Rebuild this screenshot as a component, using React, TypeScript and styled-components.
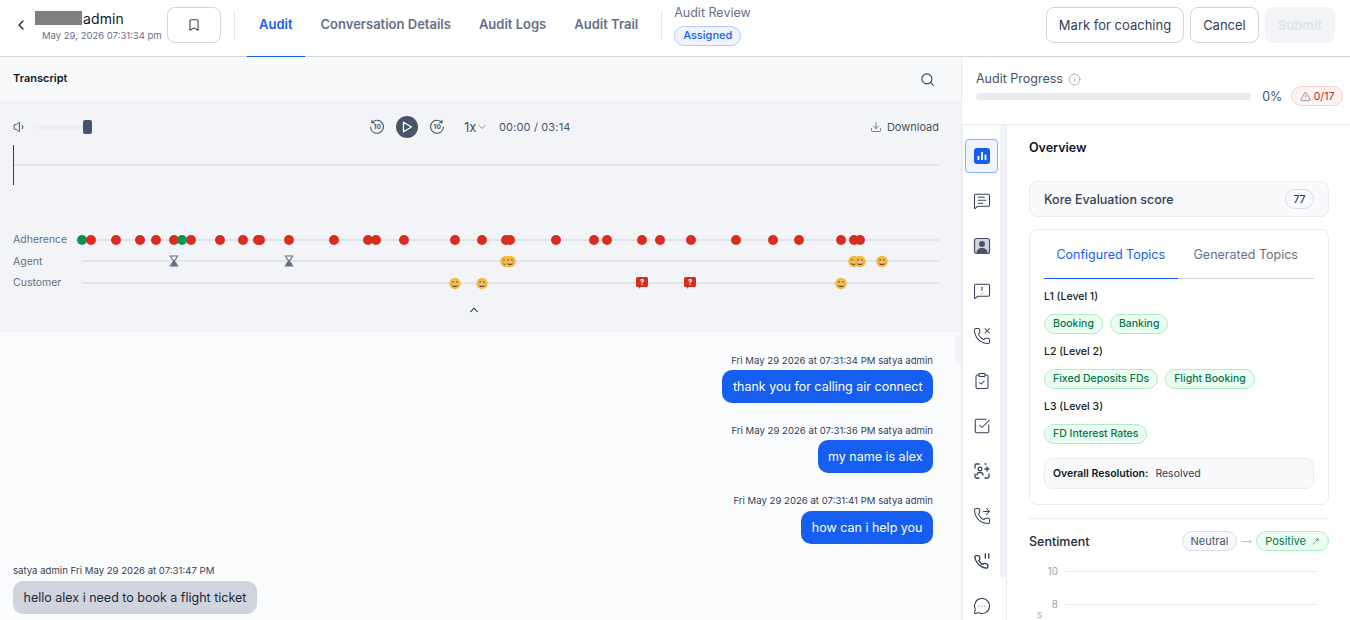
import React from "react";
import styled, { createGlobalStyle } from "styled-components";
import {
  Bookmark, ChevronDown, ChevronLeft, ChevronUp, ClipboardCheck, Download, Info, MessageCircleMore,
  MessageSquareText, MessageSquareWarning, MoveRight, MoveUpRight, PhoneForwarded, PhoneMissed, Search,
  SquareCheckBig, TriangleAlert, Volume1,
} from "lucide-react";

const Global = createGlobalStyle`
  html, body { margin: 0; padding: 0; height: 100%; overflow: hidden; background: #fff; }
  body { font-family: Inter, "Noto Sans", sans-serif; color: #101828; }
  #root { height: 100%; }
  * { box-sizing: border-box; }
`;

const Page = styled.div`
  width: 1350px; height: 620px; display: flex; flex-direction: column; overflow: hidden;
`;
const Header = styled.header`
  height: 57px; flex: none; display: flex; align-items: stretch; border-bottom: 1px solid #d0d5dd; background: #fff;
`;
const BackButton = styled.div`
  width: 35px; display: flex; align-items: center; justify-content: center; padding-left: 7px; padding-bottom: 7px; color: #1d2939;
`;
const Identity = styled.div`
  width: 132px; display: flex; flex-direction: column; padding-top: 10px;
`;
const NameRow = styled.div`
  display: flex; align-items: center; height: 16px; font-size: 14px; color: #101828; letter-spacing: 0.1px;
`;
const Redacted = styled.span`
  display: inline-block; width: 47px; height: 14px; background: #808080; margin-right: 1px;
`;
const DateText = styled.div`
  margin-top: 3px; padding-left: 7px; font-size: 9.5px; line-height: 14px; color: #667085; white-space: nowrap;
`;
const BookmarkButton = styled.div`
  width: 54px; height: 36px; margin-top: 7px; border: 1px solid #d0d5dd; border-radius: 8px; display: flex;
  align-items: center; justify-content: center; color: #344054;
`;
const VDivider = styled.div<{ $ml: number; $mr: number }>`
  width: 1px; height: 30px; margin: 10px ${(p) => p.$mr}px 0 ${(p) => p.$ml}px; background: #e4e7ec;
`;
const Tabs = styled.nav`
  display: flex; align-items: stretch; gap: 4px;
`;
const TabItem = styled.div<{ $active?: boolean }>`
  padding: 0 12px 8px; display: flex; align-items: center; font-size: 13px; font-weight: 600; white-space: nowrap;
  color: ${(p) => (p.$active ? "#155eef" : "#667085")};
  margin-bottom: -1px;
  border-bottom: 1px solid ${(p) => (p.$active ? "#155eef" : "transparent")};
`;
const ReviewBlock = styled.div`
  display: flex; flex-direction: column; align-items: flex-start; padding-top: 5px;
`;
const ReviewLabel = styled.div`
  font-size: 12.5px; line-height: 15px; color: #667085; white-space: nowrap;
`;
const AssignedBadge = styled.div`
  margin-top: 6px; height: 20px; padding: 0 8px; border: 1px solid #b2ccff; border-radius: 10px; background: #eff4ff;
  color: #155eef; font-size: 11px; font-weight: 500; line-height: 17px;
`;
const Actions = styled.div`
  margin-left: auto; display: flex; gap: 6px; padding: 7px 15px 0 0;
`;
const ActionButton = styled.div<{ $disabled?: boolean }>`
  height: 36px; padding: 0 ${(p) => (p.$disabled ? 12 : 12)}px; border-radius: 8px; display: flex; align-items: center;
  font-size: 13px; white-space: nowrap;
  font-weight: ${(p) => (p.$disabled ? 600 : 400)};
  border: 1px solid ${(p) => (p.$disabled ? "#f2f4f7" : "#d0d5dd")};
  background: ${(p) => (p.$disabled ? "#f2f4f7" : "#fff")};
  color: ${(p) => (p.$disabled ? "#e0e3ea" : "#344054")};
`;
const Body = styled.div`
  flex: 1; min-height: 0; display: flex;
`;
const LeftPane = styled.section`
  width: 962px; flex: none; display: flex; flex-direction: column; border-right: 1px solid #e9ebf1; position: relative;
`;
const TranscriptBar = styled.div`
  height: 46px; flex: none; display: flex; align-items: center; justify-content: space-between; padding: 0 26px 0 13px;
  background: #f9fafb; border-bottom: 1px solid #eceef2; color: #344054;
`;
const TranscriptTitle = styled.div`
  font-size: 11px; font-weight: 600; color: #101828; margin-top: -3px;
`;
const Player = styled.div`
  height: 229px; flex: none; background: #f2f4f7; padding: 0 22px 0 13px; display: flex; flex-direction: column; background: #f3f4f8;
`;
const ControlRow = styled.div`
  height: 42px; padding-top: 6px; display: flex; align-items: center; color: #475467; font-size: 11px;
`;
const VolumeGroup = styled.div`
  width: 356px; display: flex; align-items: center; color: #344054;
`;
const VolumeTrack = styled.div`
  width: 59px; height: 4px; margin-left: 6px; border-radius: 2px; background: #eceef2; position: relative;
`;
const VolumeThumb = styled.div`
  position: absolute; right: 0; top: -5px; width: 9px; height: 14px; border-radius: 2px; background: #475569;
`;
const Transport = styled.div`
  display: flex; align-items: center; gap: 11px;
`;
const PlayCircle = styled.div`
  width: 22px; height: 22px; border-radius: 50%; background: #475569; display: flex; align-items: center; justify-content: center;
`;
const Speed = styled.div`
  margin-left: 19px; width: 35px; display: flex; align-items: center; font-size: 13px; color: #475467;
`;
const TimeText = styled.div`
  font-size: 11px; color: #475467; letter-spacing: 0.15px;
`;
const DownloadLink = styled.div`
  margin-left: auto; display: flex; align-items: center; gap: 5px; font-size: 11px; color: #475467;
`;
const Wave = styled.div`
  height: 40px; flex: none; position: relative; display: flex; align-items: center;
`;
const WaveLine = styled.div`
  flex: 1; height: 2px; background: #e2e4ea; margin-top: -1px;
`;
const Cursor = styled.div`
  position: absolute; left: 0; top: 0; bottom: 0; width: 1px; background: #344054;
`;
const Lanes = styled.div`
  margin-top: 44px; display: flex; flex-direction: column; gap: 0;
`;
const Lane = styled.div`
  height: 21.5px; display: flex; align-items: center;
`;
const LaneLabel = styled.div`
  width: 69px; flex: none; font-size: 10.5px; color: #667085;
`;
const LaneTrack = styled.div`
  flex: 1; height: 2px; background: #e2e4ea; position: relative;
`;
const Dot = styled.div<{ $green?: boolean }>`
  position: absolute; top: 1px; width: 10px; height: 10px; margin: -5px 0 0 -5px; border-radius: 50%;
  background: ${(p) => (p.$green ? "#079455" : "#d92d20")};
`;
const Marker = styled.div`
  position: absolute; top: 1px; width: 12px; height: 12px; margin: -6px 0 0 -6px; display: flex;
`;
const CollapseRow = styled.div`
  height: 20px; margin-top: 9px; display: flex; justify-content: center; color: #101828; padding-right: 4px;
`;
const Chat = styled.div`
  flex: 1; min-height: 0; overflow: hidden; background: #fbfcfe; padding: 22px 28px 0 13px; display: flex; flex-direction: column;
`;
const Message = styled.div<{ $mine?: boolean; $mt: number }>`
  display: flex; flex-direction: column; margin-top: ${(p) => p.$mt}px;
  align-items: ${(p) => (p.$mine ? "flex-end" : "flex-start")};
`;
const Meta = styled.div`
  font-size: 9.6px; line-height: 14px; color: #344054; white-space: nowrap;
`;
const Bubble = styled.div<{ $mine?: boolean; $mt: number }>`
  margin-top: ${(p) => p.$mt}px; height: 33px; padding: 0 10.5px; border-radius: 10px; display: flex; align-items: center;
  font-size: 12.5px; white-space: nowrap;
  background: ${(p) => (p.$mine ? "#155eef" : "#d0d5dd")};
  color: ${(p) => (p.$mine ? "#fff" : "#1d2939")};
`;
const PaneScroll = styled.div`
  position: absolute; right: 0; top: 278px; width: 6px; height: 30px; border-radius: 3px; background: #f3f4f7;
`;
const RightPane = styled.aside`
  flex: 1; min-width: 0; display: flex; flex-direction: column;
`;
const ProgressPanel = styled.div`
  height: 68px; flex: none; border-bottom: 1px solid #e9ebf1; padding: 14px 7px 0 14px;
`;
const ProgressTitle = styled.div`
  display: flex; align-items: center; gap: 5px; font-size: 12.5px; color: #475467; line-height: 16px; color: #475467;
`;
const ProgressRow = styled.div`
  display: flex; align-items: center; margin-top: -1px;
`;
const ProgressBar = styled.div`
  width: 276px; height: 7px; border-radius: 4px; background: #e9ebf0;
`;
const Percent = styled.div`
  margin-left: 11px; width: 29px; font-size: 12.5px; color: #475467;
`;
const AlertBadge = styled.div`
  width: 52px; height: 20px; border: 1px solid #fecdca; border-radius: 10px; background: #fef3f2; color: #b42318;
  display: flex; align-items: center; justify-content: center; gap: 3px; font-size: 10.5px;
`;
const Lower = styled.div`
  flex: 1; min-height: 0; display: flex; overflow: hidden;
`;
const Rail = styled.div`
  width: 45px; flex: none; display: flex; border-right: 1px solid #eceef2; position: relative;
  border-left: 1px solid #eef0f4;
`;
const RailIcons = styled.div`
  width: 37px; flex: none; display: flex; flex-direction: column; align-items: center; padding-top: 14px; gap: 11px; color: #344054;
`;
const RailItem = styled.div<{ $active?: boolean }>`
  width: 33px; height: 34px; flex: none; border-radius: 4px; display: flex; align-items: center; justify-content: center;
  border: 1px solid ${(p) => (p.$active ? "#84adff" : "transparent")};
  background: ${(p) => (p.$active ? "#eff4ff" : "transparent")};
`;
const RailScroll = styled.div`
  width: 6px; height: 453px; flex: none; border-radius: 0 0 3px 3px; background: #f1f2f7;
`;
const Content = styled.div`
  flex: 1; min-width: 0; padding: 15px 21px 0 22px;
`;
const SectionTitle = styled.div`
  font-size: 12.5px; font-weight: 600; line-height: 16px; color: #101828;
`;
const ScoreCard = styled.div`
  margin-top: 25px; height: 36px; padding: 0 14px; border: 1px solid #eaecf0; border-radius: 8px; background: #f9fafb;
  display: flex; align-items: center; justify-content: space-between; font-size: 12.5px; font-weight: 500; color: #344054;
`;
const ScoreBadge = styled.div`
  width: 29px; height: 20px; border-radius: 10px; border: 1px solid #d9dcf0; background: #f8f9fc; font-size: 10.5px;
  display: flex; align-items: center; justify-content: center; color: #344054;
`;
const TopicsCard = styled.div`
  margin-top: 12px; height: 276px; padding: 0 14px; border: 1px solid #eaecf0; border-radius: 8px;
`;
const TopicTabs = styled.div`
  height: 49px; display: flex; border-bottom: 1px solid #d0d5dd;
`;
const TopicTab = styled.div<{ $active?: boolean }>`
  width: ${(p) => (p.$active ? 134 : 137)}px; display: flex; align-items: center; justify-content: center; font-size: 12.5px;
  margin-bottom: -1px;
  color: ${(p) => (p.$active ? "#155eef" : "#667085")};
  border-bottom: 1px solid ${(p) => (p.$active ? "#155eef" : "transparent")};
`;
const LevelLabel = styled.div`
  margin-top: 10px; font-size: 10.5px; font-weight: 500; line-height: 16px; color: #101828;
`;
const ChipRow = styled.div`
  margin-top: 9px; display: flex; gap: 7px; margin-bottom: 3px;
`;
const Chip = styled.div`
  height: 20px; padding: 0 8px; border: 1px solid #abefc6; border-radius: 10px; background: #ecfdf3; color: #067647;
  display: flex; align-items: center; font-size: 10.5px; font-weight: 500; white-space: nowrap; padding-bottom: 2px;
`;
const Resolution = styled.div`
  margin-top: 14px; height: 31px; padding: 0 8px; border: 1px solid #eaecf0; border-radius: 8px; background: #f9fafb;
  display: flex; align-items: center; gap: 7px; font-size: 10.5px; color: #344054;
`;
const ResolutionLabel = styled.span`
  font-weight: 600; color: #101828;
`;
const Rule = styled.div`
  margin-top: 13px; height: 1px; background: #eaecf0;
`;
const SentimentRow = styled.div`
  margin-top: 12px; display: flex; align-items: center; justify-content: space-between;
`;
const SentimentTitle = styled.div`
  font-size: 12.5px; color: #1d2939; font-weight: 500;
`;
const PillGroup = styled.div`
  display: flex; align-items: center; gap: 4px; color: #98a2b3;
`;
const Pill = styled.div<{ $positive?: boolean }>`
  height: 20px; padding: 0 8px; border-radius: 10px; display: flex; align-items: center; gap: 5px; font-size: 11px; white-space: nowrap;
  border: 1px solid ${(p) => (p.$positive ? "#abefc6" : "#d9dcf0")};
  background: ${(p) => (p.$positive ? "#ecfdf3" : "#f8f9fc")};
  color: ${(p) => (p.$positive ? "#067647" : "#475467")};
`;
const ChartArea = styled.div`
  margin-top: 20px; padding-left: 12px; position: relative;
`;
const GridRow = styled.div`
  height: 33px; display: flex; align-items: flex-start; gap: 7px; font-size: 10px; color: #98a2b3;
`;
const GridValue = styled.div`
  width: 17px; text-align: right; line-height: 12px; margin-top: -6px;
`;
const GridLine = styled.div`
  width: 252px; height: 1px; background: #eaecf0;
`;
const AxisLabel = styled.div`
  position: absolute; left: 8px; top: 39px; font-size: 8px; color: #98a2b3;
`;

const adherence = [91, 116, 140, 156, 174, 191, 220, 243, 258, 260, 289, 334, 368, 376, 404, 455, 482, 506, 510, 556, 594, 607, 642, 660, 691, 736, 773, 799, 841, 854, 860];
const agentFaces = [506, 510, 854, 860, 882];
const customerFaces = [455, 482, 841];
const offset = (x: number) => ({ left: x - 82 });

const Face = () => (
  <svg width="13" height="13" viewBox="0 0 13 13">
    <circle cx="6.5" cy="6.5" r="6.2" fill="#f5b942" />
    <circle cx="4.4" cy="4.8" r="0.9" fill="#8a5a14" />
    <circle cx="8.6" cy="4.8" r="0.9" fill="#8a5a14" />
    <path d="M3 7.2h7c0 2-1.5 3.2-3.5 3.2S3 9.2 3 7.2z" fill="#7a4d10" />
    <path d="M3.5 7.4h6v1.2h-6z" fill="#fff" />
  </svg>
);
const Hourglass = () => (
  <svg width="12" height="12" viewBox="0 0 12 12">
    <path d="M1.5 0.5h9v1h-1c0 2-1.6 3.4-2.6 4.5 1 1.1 2.6 2.5 2.6 4.5h1v1h-9v-1h1c0-2 1.6-3.4 2.6-4.5-1-1.1-2.6-2.5-2.6-4.5h-1z" fill="#667085" />
    <path d="M3.6 1.5h4.8c0 1.2-1.4 2.6-2.4 3.7-1-1.1-2.4-2.5-2.4-3.7z" fill="#f3f4f8" />
  </svg>
);
const Question = () => (
  <svg width="12" height="12" viewBox="0 0 12 12">
    <path d="M1.5 0h9A1.5 1.5 0 0 1 12 1.5v7A1.5 1.5 0 0 1 10.5 10H4.5L3 12V10H1.5A1.5 1.5 0 0 1 0 8.500v-7A1.500 1.500 0 0 1 1.500 0z" fill="#d92d20" />
    <text x="6" y="7.6" textAnchor="middle" fontSize="7.500" fontWeight="700" fill="#fff" fontFamily="Inter, sans-serif">?</text>
  </svg>
);
const Skip = ({ back }: { back?: boolean }) => (
  <svg width="16" height="16" viewBox="0 0 16 16" fill="none" stroke="#475467" strokeWidth="1.1">
    <g transform={back ? undefined : "matrix(-1 0 0 1 16 0)"}>
      <path d="M3 3.600A6.500 6.500 0 1 1 1.500 8" strokeLinecap="round" />
      <path d="M3 1.200v2.600h2.600" strokeLinecap="round" strokeLinejoin="round" />
    </g>
    <text x="8.200" y="10.400" textAnchor="middle" fontSize="6.500" fontWeight="700" fill="#475467" stroke="none" fontFamily="Inter, sans-serif">10</text>
  </svg>
);
const PHONE = "M12.2 10.500v1.700a1.200 1.200 0 0 1-1.300 1.200 11.500 11.500 0 0 1-5-1.800 11.300 11.300 0 0 1-3.500-3.500A11.500 11.500 0 0 1 .6 3.500 1.200 1.200 0 0 1 1.800 2.200h1.700a1.200 1.200 0 0 1 1.200 1c.1.600.2 1.100.4 1.600a1.200 1.200 0 0 1-.3 1.200l-.7.700a9.200 9.200 0 0 0 3.500 3.500l.7-.7a1.200 1.200 0 0 1 1.200-.3c.5.2 1 .3 1.600.4a1.200 1.200 0 0 1 1 1.200z";
const PhonePause = () => (
  <svg width="18" height="18" viewBox="0 0 16 16" fill="none" stroke="currentColor" strokeWidth="1.200" strokeLinecap="round" strokeLinejoin="round">
    <path d={PHONE} transform="translate(1 1)" />
    <path d="M11 1.500v4M14 1.500v4" />
  </svg>
);
const Portrait = () => (
  <svg width="18" height="18" viewBox="0 0 18 18">
    <rect x="1.500" y="1.500" width="15" height="15" rx="2" fill="#d0d5dd" stroke="#475467" strokeWidth="1.200" />
    <circle cx="9" cy="7" r="3" fill="#475467" />
    <path d="M3.500 16c0-3.500 2.500-5 5.500-5s5.500 1.500 5.500 5z" fill="#475467" />
  </svg>
);
const FaceScan = () => (
  <svg width="18" height="18" viewBox="0 0 18 18" fill="none" stroke="currentColor" strokeWidth="1.300" strokeLinecap="round">
    <path d="M2 6V3.500A1.500 1.500 0 0 1 3.500 2H6M2 12v2.500A1.500 1.500 0 0 0 3.500 16H6M16 12v2.500a1.500 1.500 0 0 1-1.500 1.500H12M12 2h1" />
    <circle cx="7" cy="7" r="1.800" />
    <path d="M4 13c0-1.800 1.300-2.700 3-2.700s3 .9 3 2.700" />
    <path d="M14 5v4M12 7h4" />
  </svg>
);
const BarsIcon = () => (
  <svg width="16" height="16" viewBox="0 0 16 16">
    <rect width="16" height="16" rx="3" fill="#155eef" />
    <path d="M4.500 8v4M8 4v8M11.500 6.500V12" stroke="#fff" strokeWidth="1.800" />
  </svg>
);

export default function App() {
  return (
    <Page>
      <Global />
      <Header>
        <BackButton><ChevronLeft size={16} strokeWidth={2} /></BackButton>
        <Identity>
          <NameRow><Redacted />admin</NameRow>
          <DateText>May 29, 2026 07:31:34 pm</DateText>
        </Identity>
        <BookmarkButton><Bookmark size={14} strokeWidth={1.8} /></BookmarkButton>
        <VDivider $ml={13} $mr={12} />
        <Tabs>
          <TabItem $active>Audit</TabItem>
          <TabItem>Conversation Details</TabItem>
          <TabItem>Audit Logs</TabItem>
          <TabItem>Audit Trail</TabItem>
        </Tabs>
        <VDivider $ml={11} $mr={12} />
        <ReviewBlock>
          <ReviewLabel>Audit Review</ReviewLabel>
          <AssignedBadge>Assigned</AssignedBadge>
        </ReviewBlock>
        <Actions>
          <ActionButton>Mark for coaching</ActionButton>
          <ActionButton>Cancel</ActionButton>
          <ActionButton $disabled>Submit</ActionButton>
        </Actions>
      </Header>
      <Body>
        <LeftPane>
          <TranscriptBar>
            <TranscriptTitle>Transcript</TranscriptTitle>
            <Search size={15} strokeWidth={1.8} />
          </TranscriptBar>
          <Player>
            <ControlRow>
              <VolumeGroup>
                <Volume1 size={14} strokeWidth={1.600} />
                <VolumeTrack><VolumeThumb /></VolumeTrack>
              </VolumeGroup>
              <Transport>
                <Skip back />
                <PlayCircle>
                  <svg width="12" height="12" viewBox="0 0 12 12"><path d="M2.500 1.200 10.500 6l-8 4.800z" fill="none" stroke="#fff" strokeWidth="1.300" strokeLinejoin="round" /></svg>
                </PlayCircle>
                <Skip />
              </Transport>
              <Speed>1x<ChevronDown size={12} strokeWidth={1.300} /></Speed>
              <TimeText>00:00 / 03:14</TimeText>
              <DownloadLink><Download size={12} strokeWidth={1.400} />Download</DownloadLink>
            </ControlRow>
            <Wave><WaveLine /><Cursor /></Wave>
            <Lanes>
              <Lane>
                <LaneLabel>Adherence</LaneLabel>
                <LaneTrack>
                  <Dot $green style={offset(82)} />
                  {adherence.map((x) => <Dot key={x} style={offset(x)} />)}
                  <Dot $green style={offset(182)} />
                </LaneTrack>
              </Lane>
              <Lane>
                <LaneLabel>Agent</LaneLabel>
                <LaneTrack>
                  {[174, 289].map((x) => <Marker key={x} style={offset(x)}><Hourglass /></Marker>)}
                  {agentFaces.map((x) => <Marker key={x} style={offset(x)}><Face /></Marker>)}
                </LaneTrack>
              </Lane>
              <Lane>
                <LaneLabel>Customer</LaneLabel>
                <LaneTrack>
                  {customerFaces.map((x) => <Marker key={x} style={offset(x)}><Face /></Marker>)}
                  {[642, 690].map((x) => <Marker key={x} style={offset(x)}><Question /></Marker>)}
                </LaneTrack>
              </Lane>
            </Lanes>
            <CollapseRow><ChevronUp size={14} strokeWidth={1.800} /></CollapseRow>
          </Player>
          <Chat>
            <Message $mine $mt={0}>
              <Meta>Fri May 29 2026 at 07:31:34 PM satya admin</Meta>
              <Bubble $mine $mt={2}>thank you for calling air connect</Bubble>
            </Message>
            <Message $mine $mt={21}>
              <Meta>Fri May 29 2026 at 07:31:36 PM satya admin</Meta>
              <Bubble $mine $mt={2}>my name is alex</Bubble>
            </Message>
            <Message $mine $mt={21}>
              <Meta>Fri May 29 2026 at 07:31:41 PM satya admin</Meta>
              <Bubble $mine $mt={3}>how can i help you</Bubble>
            </Message>
            <Message $mt={20}>
              <Meta>satya admin Fri May 29 2026 at 07:31:47 PM</Meta>
              <Bubble $mt={3}>hello alex i need to book a flight ticket</Bubble>
            </Message>
          </Chat>
          <PaneScroll />
        </LeftPane>
        <RightPane>
          <ProgressPanel>
            <ProgressTitle>Audit Progress <Info size={13} strokeWidth={1.500} color="#98a2b3" /></ProgressTitle>
            <ProgressRow>
              <ProgressBar />
              <Percent>0%</Percent>
              <AlertBadge><TriangleAlert size={11} strokeWidth={1.500} color="#667085" />0/17</AlertBadge>
            </ProgressRow>
          </ProgressPanel>
          <Lower>
            <Rail>
              <RailIcons>
                <RailItem $active><BarsIcon /></RailItem>
                <RailItem><MessageSquareText size={18} strokeWidth={1.400} /></RailItem>
                <RailItem><Portrait /></RailItem>
                <RailItem><MessageSquareWarning size={18} strokeWidth={1.400} /></RailItem>
                <RailItem><PhoneMissed size={18} strokeWidth={1.400} /></RailItem>
                <RailItem><ClipboardCheck size={18} strokeWidth={1.400} /></RailItem>
                <RailItem><SquareCheckBig size={18} strokeWidth={1.400} /></RailItem>
                <RailItem><FaceScan /></RailItem>
                <RailItem><PhoneForwarded size={18} strokeWidth={1.400} /></RailItem>
                <RailItem><PhonePause /></RailItem>
                <RailItem><MessageCircleMore size={18} strokeWidth={1.400} /></RailItem>
              </RailIcons>
              <RailScroll />
            </Rail>
            <Content>
              <SectionTitle>Overview</SectionTitle>
              <ScoreCard>Kore Evaluation score<ScoreBadge>77</ScoreBadge></ScoreCard>
              <TopicsCard>
                <TopicTabs>
                  <TopicTab $active>Configured Topics</TopicTab>
                  <TopicTab>Generated Topics</TopicTab>
                </TopicTabs>
                <LevelLabel>L1 (Level 1)</LevelLabel>
                <ChipRow><Chip>Booking</Chip><Chip>Banking</Chip></ChipRow>
                <LevelLabel>L2 (Level 2)</LevelLabel>
                <ChipRow><Chip>Fixed Deposits FDs</Chip><Chip>Flight Booking</Chip></ChipRow>
                <LevelLabel>L3 (Level 3)</LevelLabel>
                <ChipRow><Chip>FD Interest Rates</Chip></ChipRow>
                <Resolution><ResolutionLabel>Overall Resolution:</ResolutionLabel>Resolved</Resolution>
              </TopicsCard>
              <Rule />
              <SentimentRow>
                <SentimentTitle>Sentiment</SentimentTitle>
                <PillGroup>
                  <Pill>Neutral</Pill>
                  <MoveRight size={11} strokeWidth={1.400} />
                  <Pill $positive>Positive<MoveUpRight size={9} strokeWidth={1.500} /></Pill>
                </PillGroup>
              </SentimentRow>
              <ChartArea>
                <GridRow><GridValue>10</GridValue><GridLine /></GridRow>
                <GridRow><GridValue>8</GridValue><GridLine /></GridRow>
                <AxisLabel>S</AxisLabel>
              </ChartArea>
            </Content>
          </Lower>
        </RightPane>
      </Body>
    </Page>
  );
}
